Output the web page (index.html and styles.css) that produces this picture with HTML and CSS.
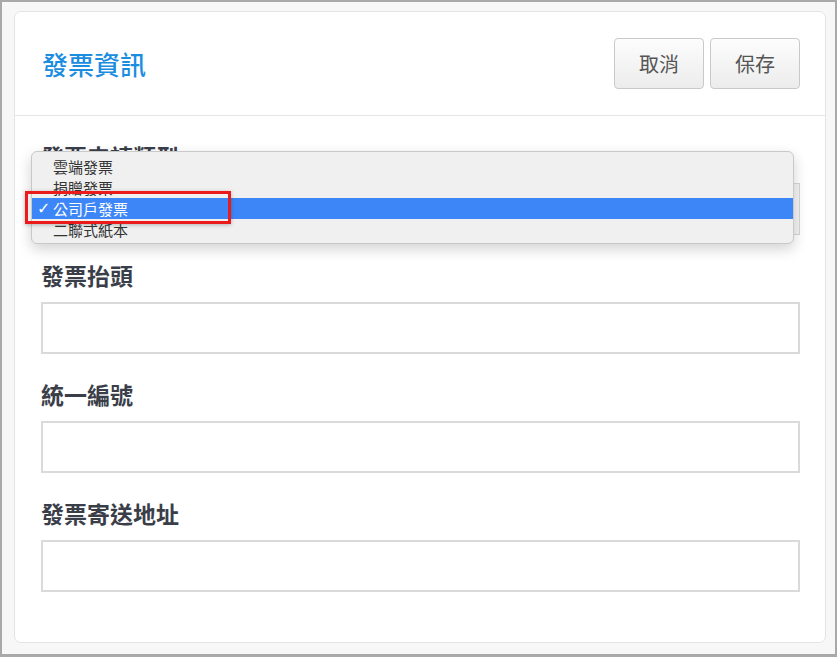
FILE: index.html
```html
<!DOCTYPE html>
<html lang="zh-Hant">
<head>
<meta charset="utf-8">
<title>發票資訊</title>
<link rel="stylesheet" href="styles.css">
</head>
<body>
<div class="window">
  <div class="card">
    <div class="card-header">
      <h1 class="title">發票資訊</h1>
      <div class="actions">
        <button class="btn" type="button">取消</button>
        <button class="btn" type="button">保存</button>
      </div>
    </div>
    <div class="card-body">
      <div class="field">
        <div class="label">發票申請類型</div>
        <div class="select-wrap">
          <div class="select"></div>
          <div class="dropdown">
            <div class="option">雲端發票</div>
            <div class="option">捐贈發票</div>
            <div class="option selected"><span class="check">✓</span>公司戶發票</div>
            <div class="option">二聯式紙本</div>
            <div class="highlight-box"></div>
          </div>
        </div>
      </div>
      <div class="field">
        <div class="label">發票抬頭</div>
        <div class="input"></div>
      </div>
      <div class="field">
        <div class="label">統一編號</div>
        <div class="input"></div>
      </div>
      <div class="field">
        <div class="label">發票寄送地址</div>
        <div class="input"></div>
      </div>
    </div>
  </div>
</div>
</body>
</html>
```

FILE: styles.css
```css
* { box-sizing: border-box; }
html, body { margin: 0; padding: 0; }
body {
  font-family: "Noto Sans CJK TC", "Noto Sans", sans-serif;
  background: #f7f7f7;
}
.window {
  height: 657px;
  border: 2px solid #a9a9a9;
  border-bottom-width: 3px;
  background: #f7f7f7;
  padding: 9px 9px 0 12px;
}
.card {
  background: #fff;
  border: 1px solid #e4e4e4;
  border-radius: 7px;
}
.card-header {
  display: flex;
  justify-content: space-between;
  align-items: center;
  padding: 26px 25px 26px 27px;
  border-bottom: 1px solid #e6e6e6;
}
.title {
  margin: 0;
  font-size: 26px;
  font-weight: 500;
  line-height: 36px;
  color: #1a8de0;
}
.actions {
  display: flex;
  gap: 6px;
}
.btn {
  width: 90px;
  height: 51px;
  font-family: inherit;
  font-size: 20px;
  color: #555;
  background: linear-gradient(#fdfdfd, #ececec);
  border: 1px solid #c9c9c9;
  border-radius: 4px;
  padding: 0;
}
.card-body {
  padding: 25px 25px 50px 26px;
}
.field { margin-bottom: 25px; }
.field:last-child { margin-bottom: 0; }
.label {
  font-size: 23px;
  line-height: 30px;
  font-weight: 700;
  color: #3a3e49;
  margin-bottom: 12px;
}
.input {
  height: 52px;
  border: 2px solid #dadada;
  background: #fff;
}
.select-wrap { position: relative; }
.select {
  height: 52px;
  border: 1px solid #d6d6d6;
  background: #f4f4f4;
}
.dropdown {
  position: absolute;
  left: -10px;
  top: -32px;
  width: 763px;
  height: 93px;
  background: #f0f0f0;
  border: 1px solid #c9c9c9;
  border-radius: 6px;
  box-shadow: 0 5px 14px rgba(0, 0, 0, 0.18);
  padding-top: 4px;
}
.option {
  position: relative;
  height: 21px;
  line-height: 21px;
  font-size: 15px;
  color: #333;
  padding-left: 21px;
}
.option.selected {
  background: #3d86f8;
  color: #fff;
}
.check {
  position: absolute;
  left: 5px;
  top: 0;
  font-size: 16px;
  font-family: "DejaVu Sans", sans-serif;
}
.highlight-box {
  position: absolute;
  left: -7px;
  top: 39px;
  width: 206px;
  height: 33px;
  border: 3px solid #ec1b1b;
  box-shadow: 0 1px 4px rgba(0, 0, 0, 0.25);
}
```
